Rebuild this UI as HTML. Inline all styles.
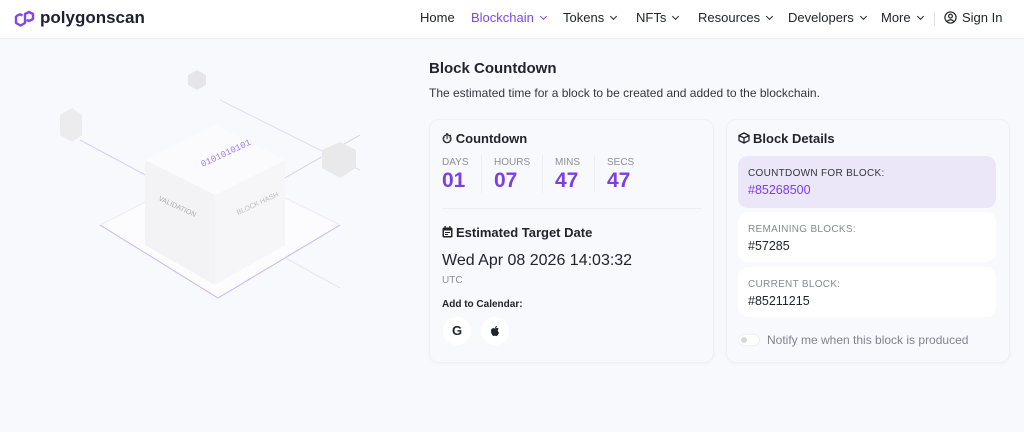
<!DOCTYPE html>
<html><head><meta charset="utf-8"><style>
*{margin:0;padding:0;box-sizing:border-box}
body{width:1024px;height:432px;background:#f8f9fc;font-family:"Liberation Sans",sans-serif;color:#212529;position:relative;overflow:hidden}
.hdr{position:absolute;left:0;top:0;width:1024px;height:39px;background:#fff;border-bottom:1px solid #eceef3}
.logo{position:absolute;left:13px;top:8px;font-weight:bold;font-size:17px;color:#212033;display:flex;align-items:center;gap:4px}
.nav{position:absolute;top:10px;font-size:13px;color:#212529}
.nav.a{color:#8247e5}
.chev{display:inline-block;width:5px;height:5px;border-right:1.3px solid currentColor;border-bottom:1.3px solid currentColor;transform:rotate(45deg);margin-left:7px;position:relative;top:-3px}
.card{position:absolute;top:119px;height:244px;background:#f8f9fc;border:1px solid #eef0f4;border-radius:10px;box-shadow:0 1px 3px rgba(0,0,0,.03)}
.h{position:absolute;font-size:13px;font-weight:bold;color:#212529}
.lab{position:absolute;font-size:10px;color:#8c8f96}
.num{position:absolute;font-size:21px;font-weight:bold;color:#7b3fe4}
.sep{position:absolute;top:155px;width:1px;height:38px;background:#eceef2}
.box{position:absolute;left:738px;width:258px;border-radius:10px;background:#fff}
.box .l{position:absolute;left:10px;top:12px;font-size:10px;color:#868a92;letter-spacing:.3px}
.box .v{position:absolute;left:10px;top:27px;font-size:12.5px;color:#212529}
.circ{position:absolute;top:317px;width:28px;height:28px;border-radius:50%;background:#fff;text-align:center;line-height:28px;font-weight:bold;font-size:13px}
</style></head><body>
<div class="hdr">
 <div class="logo"><svg width="23" height="20" viewBox="0 0 23 20"><path d="M3 8 L3 15 L7.5 17.5 L12 15 L12 6 L16 4 L20 6 L20 11 L16 13 L13.5 12" fill="none" stroke="#8247e5" stroke-width="2.4" stroke-linejoin="round"/><path d="M9.5 7.5 L7 6.3 L3 8.2" fill="none" stroke="#8247e5" stroke-width="2.4" stroke-linejoin="round"/></svg>polygonscan</div>
 <span class="nav" style="left:420px">Home</span>
 <span class="nav a" style="left:471px">Blockchain<i class="chev"></i></span>
 <span class="nav" style="left:563px">Tokens<i class="chev"></i></span>
 <span class="nav" style="left:636px">NFTs<i class="chev"></i></span>
 <span class="nav" style="left:698px">Resources<i class="chev"></i></span>
 <span class="nav" style="left:788px">Developers<i class="chev"></i></span>
 <span class="nav" style="left:881px">More<i class="chev"></i></span>
 <span style="position:absolute;left:934px;top:12px;width:1px;height:14px;background:#dde0e5"></span>
 <span class="nav" style="left:944px"><svg width="13" height="13" viewBox="0 0 14 14" style="vertical-align:-2px;margin-right:5px"><circle cx="7" cy="7" r="6" fill="none" stroke="#212529" stroke-width="1.3"/><circle cx="7" cy="5.5" r="2" fill="none" stroke="#212529" stroke-width="1.3"/><path d="M3.3 11.3 Q7 7.5 10.7 11.3" fill="none" stroke="#212529" stroke-width="1.3"/></svg>Sign In</span>
</div>

<svg style="position:absolute;left:60px;top:60px" width="320" height="250" viewBox="0 0 320 250">
 <path d="M20 80 L160 155 L300 75" stroke="#d6ccf3" stroke-width="1" fill="none"/>
 <path d="M160 40 L300 110" stroke="#e2dcf5" fill="none"/>
 <path d="M220 195 L280 228" stroke="#e5e7ec" fill="none"/>
 <polygon points="40,165 158,105 280,165 158,238" fill="#fcfcfe" stroke="#ece9f6"/>
 <path d="M40 165 L158 238 L280 165" stroke="#c9b8f0" fill="none" stroke-width="1"/>
 <polygon points="85,100 155,65 225,100 155,135" fill="#fbfbfd"/>
 <polygon points="85,100 155,135 155,225 85,185" fill="#f3f3f6"/>
 <polygon points="155,135 225,100 225,185 155,225" fill="#f6f6f8"/>
 <text x="137" y="98" font-size="9" fill="#9b7de8" font-family="Liberation Mono" transform="rotate(-25 160 90)">0101010101</text>
 <text x="98" y="140" font-size="7" fill="#aaa" transform="rotate(25 98 140)">VALIDATION</text>
 <text x="178" y="155" font-size="7" fill="#bbb" transform="rotate(-25 178 155)">BLOCK HASH</text>
 <polygon points="128,15 137,10 146,15 146,25 137,30 128,25" fill="#e6e6ea"/>
 <polygon points="0,55 12,48 22,55 22,75 12,82 0,75" fill="#ececef"/>
 <polygon points="262,90 280,82 296,90 296,108 280,118 262,108" fill="#e9e9ec"/>
</svg>

<div style="position:absolute;left:429px;top:60px;font-size:15px;font-weight:bold">Block Countdown</div>
<div style="position:absolute;left:429px;top:86px;font-size:12px;color:#33363b">The estimated time for a block to be created and added to the blockchain.</div>

<div class="card" style="left:429px;width:285px"></div>
<div class="card" style="left:726px;width:284px"></div>

<div class="h" style="left:442px;top:131px">⏱ Countdown</div>
<div class="lab" style="left:442px;top:157px">DAYS</div><div class="num" style="left:442px;top:169px">01</div>
<div class="sep" style="left:481px"></div>
<div class="lab" style="left:494px;top:157px">HOURS</div><div class="num" style="left:494px;top:169px">07</div>
<div class="sep" style="left:542px"></div>
<div class="lab" style="left:555px;top:157px">MINS</div><div class="num" style="left:555px;top:169px">47</div>
<div class="sep" style="left:594px"></div>
<div class="lab" style="left:607px;top:157px">SECS</div><div class="num" style="left:607px;top:169px">47</div>
<div style="position:absolute;left:442px;top:208px;width:260px;height:1px;background:#ebedf1"></div>
<div class="h" style="left:442px;top:225px"><svg width="11" height="12" viewBox="0 0 11 12" style="vertical-align:-1px;margin-right:3px"><rect x="0.5" y="1.5" width="10" height="10" rx="1.5" fill="#212529"/><rect x="2" y="4.5" width="7" height="5.5" fill="#fff"/><rect x="3" y="6" width="5" height="1" fill="#212529"/><rect x="3" y="8" width="3" height="1" fill="#212529"/><rect x="2.5" y="0" width="1.3" height="3" fill="#212529"/><rect x="7.2" y="0" width="1.3" height="3" fill="#212529"/></svg>Estimated Target Date</div>
<div style="position:absolute;left:442px;top:252px;font-size:16px;color:#212529">Wed Apr 08 2026 14:03:32</div>
<div class="lab" style="left:442px;top:275px">UTC</div>
<div style="position:absolute;left:442px;top:299px;font-size:10px;font-weight:bold">Add to Calendar:</div>
<div class="circ" style="left:443px">G</div>
<div class="circ" style="left:481px"><svg width="10" height="12" viewBox="0 0 10 12" style="position:absolute;left:9px;top:8px"><path d="M5 3.5 C3 2.5 1 3.5 1 6 C1 9 3 11.5 4 11 C4.7 10.7 5.3 10.7 6 11 C7 11.5 9 9 9 7.5 C7.5 6.8 7.5 4.3 8.7 3.8 C7.8 2.7 6.3 2.7 5 3.5Z M5 3 C5 1.8 6 0.8 7 0.7 C7 2 6 3 5 3Z" fill="#212529"/></svg></div>

<div class="h" style="left:738px;top:131px"><svg width="12" height="12" viewBox="0 0 12 12" style="vertical-align:-1px;margin-right:3px"><path d="M6 1 L11 3.5 L11 8.5 L6 11 L1 8.5 L1 3.5Z M1 3.5 L6 6 L11 3.5 M6 6 L6 11" fill="none" stroke="#212529" stroke-width="1.3" stroke-linejoin="round"/></svg>Block Details</div>
<div class="box" style="top:156px;height:52px;background:#ebe6f8"><div class="l" style="color:#33363b">COUNTDOWN FOR BLOCK:</div><div class="v" style="color:#7b3fe4">#85268500</div></div>
<div class="box" style="top:212px;height:50px"><div class="l">REMAINING BLOCKS:</div><div class="v">#57285</div></div>
<div class="box" style="top:267px;height:50px"><div class="l">CURRENT BLOCK:</div><div class="v">#85211215</div></div>
<div style="position:absolute;left:738px;top:334px;width:22px;height:12px;border-radius:6px;background:#fff;border:1px solid #eef0f3"><div style="position:absolute;left:2px;top:2px;width:6px;height:6px;border-radius:50%;background:#d5d7dc"></div></div>
<div style="position:absolute;left:767px;top:333px;font-size:12px;color:#80848b">Notify me when this block is produced</div>
</body></html>
